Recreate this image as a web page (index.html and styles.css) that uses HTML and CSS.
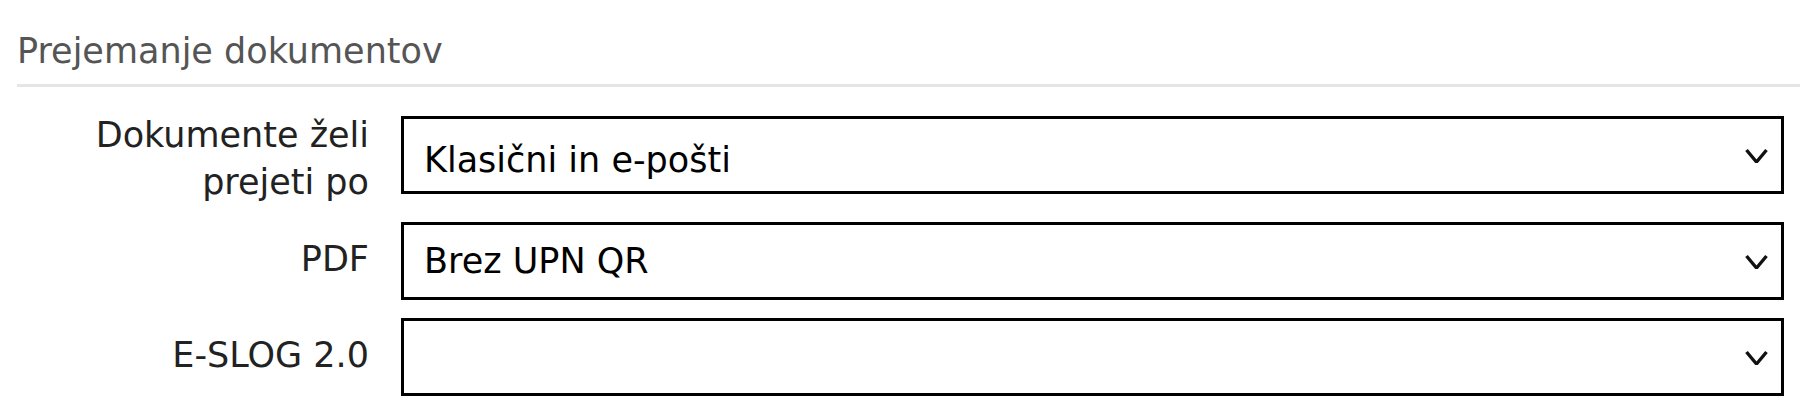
FILE: index.html
```html
<!DOCTYPE html>
<html lang="sl">
<head>
<meta charset="utf-8">
<title>Prejemanje dokumentov</title>
<link rel="stylesheet" href="styles.css">
</head>
<body>
<section class="panel">
  <h2 class="panel-title">Prejemanje dokumentov</h2>
  <div class="form">
    <div class="row">
      <label class="label label--multi">Dokumente želi prejeti po</label>
      <div class="select">
        <span class="select-value select-value--low">Klasični in e-pošti</span>
        <svg class="chev" width="25" height="19" viewBox="0 0 25 19"><polyline points="2.5,3 12.5,15 22.5,3" /></svg>
      </div>
    </div>
    <div class="row">
      <label class="label">PDF</label>
      <div class="select">
        <span class="select-value">Brez UPN QR</span>
        <svg class="chev" width="25" height="19" viewBox="0 0 25 19"><polyline points="2.5,3 12.5,15 22.5,3" /></svg>
      </div>
    </div>
    <div class="row">
      <label class="label">E-SLOG 2.0</label>
      <div class="select">
        <span class="select-value"></span>
        <svg class="chev" width="25" height="19" viewBox="0 0 25 19"><polyline points="2.5,3 12.5,15 22.5,3" /></svg>
      </div>
    </div>
  </div>
</section>
</body>
</html>
```
FILE: styles.css
```css
* { box-sizing: border-box; }
html, body {
  margin: 0;
  padding: 0;
  background: #fff;
}
body {
  font-family: "DejaVu Sans", Verdana, sans-serif;
  font-size: 35px;
  color: #222;
  width: 1800px;
  overflow: hidden;
}
.panel {
  padding: 30px 0 0 17px;
}
.panel-title {
  margin: 0;
  font-size: 35px;
  font-weight: normal;
  line-height: 42px;
  color: #555;
  padding-bottom: 12px;
  border-bottom: 3px solid #e5e5e5;
}
.form {
  display: flex;
  flex-direction: column;
  gap: 18px;
  padding: 29px 16px 0 0;
}
.row {
  display: flex;
  align-items: flex-start;
}
.label {
  flex: 0 0 384px;
  width: 384px;
  padding: 14px 32px 0 0;
  text-align: right;
  line-height: 47px;
  color: #222;
}
.label--multi {
  padding-top: 0;
  margin-top: -4px;
  margin-bottom: -2px;
}
.select {
  flex: 1 1 auto;
  height: 78px;
  border: 3px solid #000;
  display: flex;
  align-items: center;
  padding: 0 12px 0 20px;
  background: #fff;
}
.select-value {
  color: #000;
  white-space: nowrap;
}
.select-value--low {
  padding-top: 9px;
}
.chev {
  margin-left: auto;
  margin-top: 3px;
  flex: 0 0 auto;
}
.chev polyline {
  fill: none;
  stroke: #111;
  stroke-width: 3.4;
  stroke-linejoin: bevel;
}
```
